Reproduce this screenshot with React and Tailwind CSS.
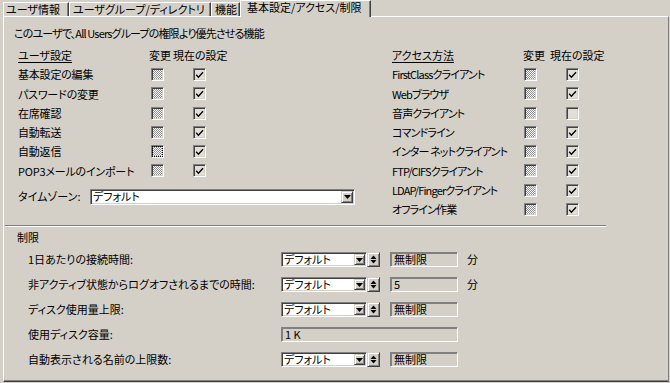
import React from 'react';

const font = "font-['Noto_Sans_CJK_JP','Noto_Sans',sans-serif] [font-feature-settings:'palt']";
const sunken = 'border border-t-[#808080] border-l-[#808080] border-r-white border-b-white shadow-[inset_1px_1px_0_#404040,inset_-1px_-1px_0_#d4d0c8]';
const raised = 'border border-t-[#d4d0c8] border-l-[#d4d0c8] border-r-[#404040] border-b-[#404040] shadow-[inset_1px_1px_0_#ffffff,inset_-1px_-1px_0_#808080] bg-[#d4d0c8]';

const userRows = [
    { label: '基本設定の編集', on: true },
    { label: 'パスワードの変更', on: true },
    { label: '在席確認', on: true },
    { label: '自動転送', on: true },
    { label: '自動返信', on: true, focus: true },
    { label: 'POP3メールのインポート', on: true },
];

const accessRows = [
    { label: 'FirstClassクライアント', on: true },
    { label: 'Webブラウザ', on: true },
    { label: '音声クライアント', on: false },
    { label: 'コマンドライン', on: true },
    { label: 'インター ネットクライアント', on: true },
    { label: 'FTP/CIFSクライアント', on: true },
    { label: 'LDAP/Fingerクライアント', on: true },
    { label: 'オフライン作業', on: true },
];

const Hatch = ({ focus }) => (
    <div className={`w-[13px] h-[13px] ${sunken} bg-[image:repeating-conic-gradient(#8c8c8c_0_25%,#ffffff_0_50%)] bg-[length:2px_2px] flex items-center justify-center`}>
        {focus && <div className="w-[11px] h-[11px] border border-dotted border-black" />}
    </div>
);

const Check = ({ on }) => (
    <div className={`w-[13px] h-[13px] ${sunken} bg-[#e2dfd9] flex items-center justify-center`}>
        {on && (
            <svg width="9" height="9" viewBox="0 0 9 9">
                <path d="M1.2 4.8 L3.4 7.2 L8 2.2" fill="none" stroke="#000" strokeWidth="1.3" />
            </svg>
        )}
    </div>
);

const DropBtn = ({ w = 'w-[11px]' }) => (
    <div className={`${w} h-full ${raised} flex items-center justify-center shrink-0`}>
        <svg width="7" height="4" viewBox="0 0 7 4">
            <polygon points="0,0 7,0 3.5,4" fill="#000" />
        </svg>
    </div>
);

const Spinner = () => (
    <div className={`w-[13px] h-[15px] ${raised} flex items-center justify-center shrink-0`}>
        <svg width="7" height="9" viewBox="0 0 7 9">
            <polygon points="0.5,4 3.5,0.5 6.5,4" fill="#000" />
            <polygon points="0.5,5 3.5,8.5 6.5,5" fill="#000" />
        </svg>
    </div>
);

const Select = ({ className, btn }) => (
    <div className={`${className} ${sunken} bg-white p-[1px] flex items-stretch shrink-0`}>
        <div className="flex-1 pl-[1px] flex items-center leading-none">デフォルト</div>
        <DropBtn w={btn} />
    </div>
);

const TextBox = ({ className, children }) => (
    <div className={`${className} h-[15px] border border-t-[#808080] border-l-[#808080] border-r-white border-b-white shadow-[inset_1px_1px_0_#808080] bg-[#d4d0c8] pl-[3px] flex items-center leading-none shrink-0`}>
        {children}
    </div>
);

const CheckColumn = ({ title, rows, chg, labelW, labelCls, hatchPl, checkPl }) => (
    <div className="flex flex-col">
        <div className="h-[19px] flex items-center">
            <div className={`${labelW} shrink-0`}>
                <span className="underline underline-offset-[2px]">{title}</span>
            </div>
            <div className={`${chg} shrink-0`}>変更</div>
            <div>現在の設定</div>
        </div>
        {rows.map((r) => (
            <div key={r.label} className="h-[19.25px] flex items-center">
                <div className={`${labelW} ${labelCls} shrink-0 whitespace-nowrap`}>{r.label}</div>
                <div className={`${chg} ${hatchPl} shrink-0 flex`}>
                    <Hatch focus={r.focus} />
                </div>
                <div className={`flex ${checkPl}`}>
                    <Check on={r.on} />
                </div>
            </div>
        ))}
    </div>
);

const LimitRow = ({ label, children }) => (
    <div className="h-[25px] flex items-center">
        <div className="w-[253px] shrink-0 whitespace-nowrap">{label}</div>
        {children}
    </div>
);

const Tab = ({ w, pl, children }) => (
    <div className={`${w} ${pl} h-[14px] border-t border-l border-white border-r border-r-[#404040] shadow-[inset_-1px_0_0_#808080] flex items-center leading-none whitespace-nowrap`}>
        {children}
    </div>
);

export default function App() {
    return (
        <div className={`w-[670px] h-[383px] bg-[#d4d0c8] text-black text-[11px] ${font} overflow-hidden`}>
            {/* tabs */}
            <div className="h-[16px] flex items-end pl-[3px]">
                <Tab w="w-[66px]" pl="pl-[2px]">ユーザ情報</Tab>
                <Tab w="w-[142px]" pl="pl-[3px]">ユーザグループ/ディレクトリ</Tab>
                <Tab w="w-[29px]" pl="pl-[3px]">機能</Tab>
                <div className="relative z-10 w-[131px] h-[17px] -mb-[1px] bg-[#d4d0c8] border-t border-l border-white border-r border-r-[#404040] shadow-[inset_-1px_0_0_#808080] pl-[6px] pb-[3px] flex items-center leading-none whitespace-nowrap">
                    基本設定/アクセス/制限
                </div>
            </div>

            {/* panel */}
            <div className="ml-[3px] w-[666px] h-[366px] border border-white border-r-[#808080] border-b-[#404040] shadow-[inset_0_-1px_0_#808080] flex flex-col">
                <div className="mt-[9px] ml-[10px] h-[14px] flex items-center whitespace-nowrap tracking-[-0.85px]">
                    このユーザで、All Usersグループの権限より優先させる機能
                </div>

                <div className="mt-[6px] flex">
                    <div className="ml-[14px] w-[374px] flex flex-col">
                        <CheckColumn
                            title="ユーザ設定"
                            rows={userRows}
                            labelW="w-[131px]"
                            labelCls="tracking-[-0.2px]"
                            chg="w-[24px]"
                            hatchPl="pl-[2px]"
                            checkPl="pl-[20px]"
                        />
                        <div className="mt-[8px] h-[16px] flex items-center">
                            <div className="w-[72px] shrink-0">タイムゾーン:</div>
                            <Select className="w-[265px] h-[16px]" btn="w-[12px]" />
                        </div>
                    </div>
                    <CheckColumn
                        title="アクセス方法"
                        rows={accessRows}
                        labelW="w-[131px]"
                        labelCls="tracking-[-0.85px]"
                        chg="w-[27px]"
                        hatchPl="pl-[1px]"
                        checkPl="pl-[16px]"
                    />
                </div>

                <div className="mt-[6px] ml-[1px] w-[601px] h-[2px] border-t border-[#808080] border-b border-b-white" />

                <div className="mt-[3px] ml-[13px] h-[14px] flex items-center">制限</div>

                <div className="mt-[3px] ml-[24px] flex flex-col">
                    <LimitRow label="1日あたりの接続時間:">
                        <Select className="w-[86px] h-[15px]" />
                        <Spinner />
                        <TextBox className="ml-[10px] w-[68px]">無制限</TextBox>
                        <div className="ml-[9px]">分</div>
                    </LimitRow>
                    <LimitRow label="非アクティブ状態からログオフされるまでの時間:">
                        <Select className="w-[86px] h-[15px]" />
                        <Spinner />
                        <TextBox className="ml-[10px] w-[68px]">5</TextBox>
                        <div className="ml-[9px]">分</div>
                    </LimitRow>
                    <LimitRow label="ディスク使用量上限:">
                        <Select className="w-[86px] h-[15px]" />
                        <Spinner />
                        <TextBox className="ml-[10px] w-[68px]">無制限</TextBox>
                    </LimitRow>
                    <LimitRow label="使用ディスク容量:">
                        <TextBox className="w-[177px]">1 K</TextBox>
                    </LimitRow>
                    <LimitRow label="自動表示される名前の上限数:">
                        <Select className="w-[86px] h-[15px]" />
                        <Spinner />
                        <TextBox className="ml-[10px] w-[68px]">無制限</TextBox>
                    </LimitRow>
                </div>
            </div>
        </div>
    );
}
